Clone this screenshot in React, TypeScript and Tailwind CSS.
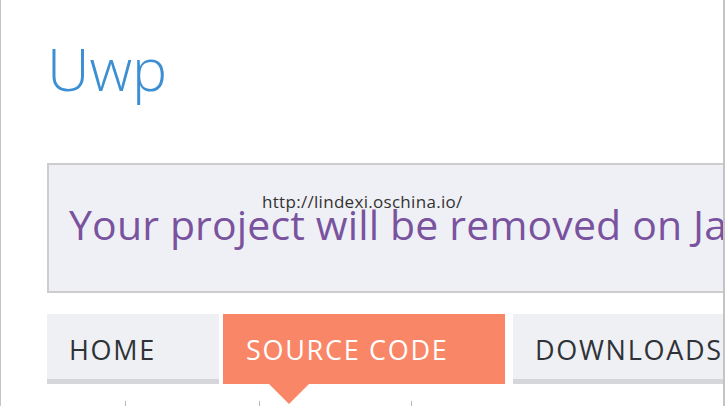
const TICKS = [124, 258, 410];

function Tab({ label, active, width }: { label: string; active?: boolean; width: string }) {
  if (active) {
    return (
      <div className={`relative h-[70px] ${width} bg-[#f98667] pl-[23px] flex items-center shrink-0`}>
        <span className="text-[27px] leading-none tracking-[1.7px] text-white">{label}</span>
        <div className="absolute left-[46px] top-full w-0 h-0 border-l-[20px] border-r-[20px] border-t-[20px] border-l-transparent border-r-transparent border-t-[#f98667]" />
      </div>
    );
  }
  return (
    <div className={`h-[70px] ${width} bg-[#eff0f4] border-b-[5px] border-[#d5d6da] pl-[22px] flex items-center shrink-0`}>
      <span className="text-[27px] leading-none tracking-[1.7px] text-[#2f3338] pt-[5px]">{label}</span>
    </div>
  );
}

export default function App() {
  return (
    <div
      className="relative w-[725px] h-[406px] bg-white border-l border-r-2 border-[#c4c4c4] overflow-hidden"
      style={{ fontFamily: '"Open Sans", "Noto Sans", sans-serif' }}
    >
      <div className="pl-[46px] pt-[39px]">
        <h1 className="text-[59px] leading-none font-light text-[#3b8fd2]">Uwp</h1>

        <div className="relative mt-[65px] w-[800px] h-[130px] bg-[#eff0f5] border-2 border-[#cdcdcd] pl-[20px] pt-[39px]">
          <p className="text-[41px] leading-none tracking-[0.15px] whitespace-nowrap text-[#7a539f]">
            Your project will be removed on January 1st
          </p>
          <span className="absolute left-[213px] top-[28px] text-[17px] leading-none tracking-[0.3px] text-[#333]">
            http://lindexi.oschina.io/
          </span>
        </div>

        <div className="mt-[21px] flex gap-[4px]">
          <Tab label="HOME" width="w-[172px]" />
          <Tab label="SOURCE CODE" width="w-[282px]" active />
          <div className="w-[2px]" />
          <Tab label="DOWNLOADS" width="w-[260px]" />
        </div>
      </div>

      {TICKS.map((x) => (
        <div key={x} className="absolute bottom-0 h-[5px] w-px bg-[#b8b8b8]" style={{ left: x }} />
      ))}
    </div>
  );
}
